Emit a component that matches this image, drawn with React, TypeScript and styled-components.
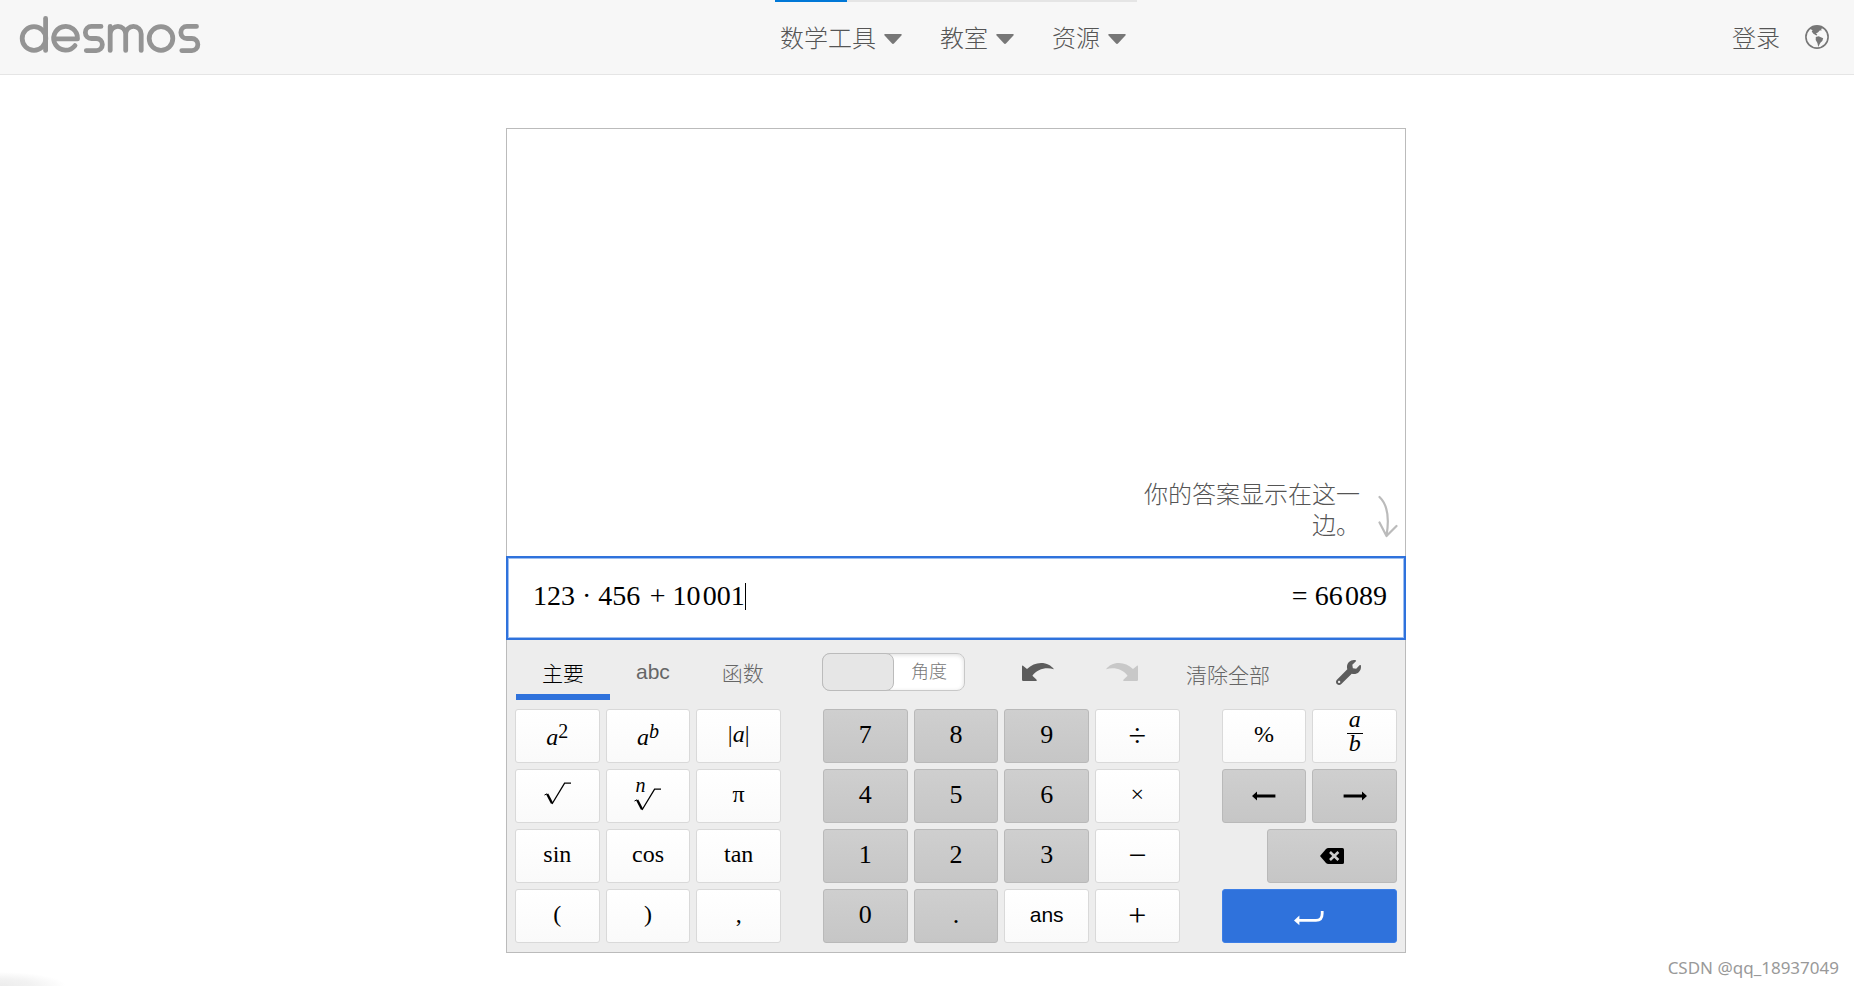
import React, { useState } from 'react';
import styled, { createGlobalStyle, css } from 'styled-components';
import { FaWrench } from 'react-icons/fa';

const sans = '"Liberation Sans", "Noto Sans CJK SC", sans-serif';
const serif = '"Liberation Serif", "Noto Sans CJK SC", serif';
const blue = '#2f72dc';

const GlobalStyle = createGlobalStyle`
  *, *::before, *::after { box-sizing: border-box; }
  body { margin: 0; background: #fff; font-family: ${sans}; }
  button, input { font: inherit; color: inherit; }
  button { cursor: pointer; }
`;

const Page = styled.div`
  position: relative;
  display: flex;
  flex-direction: column;
  min-height: 100vh;
`;

const Header = styled.header`
  display: grid;
  grid-template-columns: 1fr auto 1fr;
  height: 75px;
  padding-left: 58px;
  background: #f7f7f7;
  border-bottom: 1px solid #e5e5e5;
`;

const LogoLink = styled.a`
  justify-self: start;
  display: block;
  margin: 15px 0 0 -39px;
  svg { display: block; }
`;

const NavArea = styled.div`
  width: 362px;
`;

const ProgressBar = styled.div`
  height: 2px;
  background: #e5e5e5;
`;

const ProgressFill = styled.div`
  width: 20%;
  height: 100%;
  background: #0078d7;
`;

const Nav = styled.nav`
  display: flex;
  gap: 38px;
  height: 72px;
  padding: 2px 5px 0;
  align-items: center;
`;

const NavButton = styled.button`
  display: flex;
  align-items: center;
  gap: 8px;
  flex: none;
  padding: 0;
  border: 0;
  background: none;
  color: #555;
  font-size: 24px;
  font-weight: 300;
  line-height: 36px;
`;

const Account = styled.div`
  justify-self: end;
  display: flex;
  align-items: center;
  gap: 25px;
  padding-right: 25px;
`;

const LoginLink = styled.a`
  padding-bottom: 2px;
  color: #555;
  font-size: 24px;
  font-weight: 300;
  text-decoration: none;
`;

const IconButton = styled.button`
  display: flex;
  align-items: center;
  justify-content: center;
  padding: 0;
  border: 0;
  background: none;
  color: #5c5c5c;
  &:disabled { color: #c8c8c8; }
`;

const Main = styled.main`
  flex: 1;
  display: flex;
  justify-content: center;
  padding: 53px 0 33px 58px;
`;

const Calculator = styled.section`
  display: flex;
  flex-direction: column;
  width: 900px;
  max-width: 100%;
  border: 1px solid #bbb;
  background: #fff;
`;

const Transcript = styled.div`
  flex: 1;
  display: flex;
  align-items: flex-end;
  justify-content: flex-end;
  gap: 18px;
  padding: 0 7px 15px 0;
  svg { margin-bottom: 2px; }
`;

const Hint = styled.p`
  width: 220px;
  margin: 0;
  color: #555;
  font-size: 24px;
  font-weight: 300;
  line-height: 31px;
  text-align: right;
`;

const ExpressionRow = styled.div`
  display: flex;
  align-items: center;
  height: 84px;
  margin: 0 -1px;
  padding: 0 17px 4px 25px;
  border: 2px solid ${blue};
  box-shadow: inset 0 0 0 1px #9dbef0;
  font-family: ${serif};
  font-size: 28px;
  color: #000;
`;

const ExpressionInput = styled.input`
  field-sizing: content;
  padding: 0;
  border: 0;
  outline: 0;
  background: none;
`;

const Caret = styled.span`
  width: 1px;
  height: 27px;
  background: #000;
`;

const Result = styled.output`
  margin-left: auto;
  white-space: pre;
`;

const Keypad = styled.div`
  padding: 0 8px 9px;
  background: #ededed;
`;

const columns = css`
  display: grid;
  grid-template-columns: repeat(3, 1fr) 30px repeat(4, 1fr) 30px repeat(2, 1fr);
  gap: 6px;
`;

const Toolbar = styled.div`
  ${columns}
  height: 69px;
`;

const Tabs = styled.div`
  grid-column: 1 / 5;
  display: flex;
  height: 60px;
  padding-left: 1px;
`;

const Tab = styled.button<{ $active: boolean }>`
  padding: 9px 26px 0;
  border: 0;
  border-bottom: 6px solid ${p => (p.$active ? blue : 'transparent')};
  background: none;
  color: ${p => (p.$active ? '#000' : '#666')};
  font-size: 21px;
  font-weight: 300;
  white-space: nowrap;
`;

const Tools = styled.div`
  grid-column: 5 / 12;
  display: flex;
  align-items: center;
  height: 64px;
`;

const AngleToggle = styled.div`
  display: flex;
  width: 143px;
  height: 38px;
  margin: 0 57px 0 -1px;
  border: 1px solid #c8c8c8;
  border-radius: 8px;
  background: #fff;
  box-shadow: inset 0 1px 4px #ddd;
`;

const AngleOption = styled.button<{ $selected?: boolean }>`
  flex: 1;
  margin: ${p => (p.$selected ? '-1px 0 -1px -1px' : '0')};
  padding: 0 0 4px;
  border: ${p => (p.$selected ? '1px solid #bbb' : '0')};
  border-radius: 8px;
  background: ${p => (p.$selected ? '#e6e6e6' : 'none')};
  color: #777;
  font-size: 18px;
  font-weight: 300;
`;

const History = styled.div`
  display: flex;
  gap: 52px;
`;

const ClearButton = styled.button`
  margin: 4px 66px 0 48px;
  padding: 0;
  border: 0;
  background: none;
  color: #666;
  font-size: 21px;
  font-weight: 300;
  white-space: nowrap;
`;

const Keys = styled.div`
  ${columns}
  grid-auto-rows: 54px;
`;

type Tone = 'light' | 'dark' | 'blue';
type Face = 'math' | 'sans' | 'digit' | 'operator';

const tones = {
  light: css`
    border-color: #d9d9d9;
    background: linear-gradient(#fff, #fafafa);
    color: #000;
  `,
  dark: css`
    border-color: #b9b9b9;
    background: linear-gradient(#cfcfcf, #c6c6c6);
    color: #000;
  `,
  blue: css`
    border-color: #3c7ee6;
    background: ${blue};
    color: #fff;
  `,
};

const faces = {
  math: css`
    padding: 0 0 5px;
    font-family: ${serif};
    font-size: 24px;
  `,
  sans: css`
    padding: 0 0 3px;
    font-family: ${sans};
    font-size: 21px;
  `,
  digit: css`
    padding: 0 0 3px;
    font-family: ${serif};
    font-size: 26px;
  `,
  operator: css`
    padding: 0 0 3px;
    font-family: ${serif};
    font-size: 32px;
  `,
};

const Key = styled.button<{ $tone: Tone; $col: number; $span?: number; $face?: Face }>`
  grid-column: ${p => p.$col} / span ${p => p.$span ?? 1};
  display: flex;
  align-items: center;
  justify-content: center;
  min-width: 0;
  border: 1px solid;
  border-radius: 3px;
  line-height: 28px;
  ${p => faces[p.$face ?? 'math']}
  ${p => tones[p.$tone]}
`;

const IconKey = styled(Key)`
  padding: 0;
`;

const BackspaceKey = styled(IconKey)`
  justify-self: end;
  width: 74%;
`;

const EnterKey = styled(IconKey)`
  padding-top: 3px;
`;

const PowerKey = styled(Key)`
  padding: 2px 0 0;
`;

const Variable = styled.i`
  font-family: ${serif};
`;

const Exponent = styled.sup`
  align-self: flex-start;
  padding-top: 5px;
  font-size: 20px;
  line-height: 28px;
`;

const NthRoot = styled.span`
  display: flex;
  flex-direction: column;
  font-size: 20px;
  line-height: 16px;
  text-align: left;
  i { padding-left: 1px; }
  svg { margin-top: -5px; }
`;

const Fraction = styled.span`
  align-self: flex-start;
  display: flex;
  flex-direction: column;
  width: 16px;
  text-align: center;
  line-height: 18px;
  i:first-child {
    padding-bottom: 5px;
    border-bottom: 1px solid #000;
  }
`;

const Watermark = styled.div`
  position: absolute;
  right: 15px;
  bottom: 6px;
  color: #999;
  font-family: "Noto Sans", sans-serif;
  font-size: 17px;
  line-height: 24px;
`;

const CornerShade = styled.div`
  position: absolute;
  left: 0;
  bottom: 0;
  width: 66px;
  height: 14px;
  background: radial-gradient(ellipse 100% 100% at 0 100%, #ececec, #f2f2f2 50%, #fff);
`;

const Logo = () => (
  <svg width="182" height="38" viewBox="19 15 182 38" fill="none" stroke="#949494" strokeWidth="4.8" strokeLinecap="round" strokeLinejoin="round" aria-hidden="true">
    <circle cx="34" cy="38.5" r="11.8" />
    <path d="M45.6 18.4V50.4" />
    <path d="M54 38.8H77.5A11.9 11.9 0 1 0 75 45.6" />
    <path d="M101 26.4H91.4a6 6 0 0 0 0 12.1H96.3a6 6 0 0 1 0 12.1H86.3" />
    <path d="M110.2 50.4V26.4M110.2 34a7.75 7.6 0 0 1 15.5 0V50.4M125.7 34a7.75 7.6 0 0 1 15.5 0V50.4" />
    <circle cx="161" cy="38.5" r="11.8" />
    <path d="M196.5 26.4H186.9a6 6 0 0 0 0 12.1H191.8a6 6 0 0 1 0 12.1H181.8" />
  </svg>
);

const Triangle = () => (
  <svg width="18" height="10" viewBox="0 0 18 10" aria-hidden="true">
    <path d="M1.2 0H16.8Q18.4 .3 17.4 1.6L10.2 9.3Q9 10.5 7.8 9.3L.6 1.6Q-.4 .3 1.2 0Z" fill="#777" />
  </svg>
);

const Globe = () => (
  <svg width="24" height="24" viewBox="0 0 24 24" aria-hidden="true">
    <circle cx="12" cy="12" r="11.1" fill="none" stroke="#777" strokeWidth="1.6" />
    <path d="M6.3 2.7L9 1L16.3 1.3L17.4 3.4L15.8 4L17 5.2L14.7 5.6L12.9 7.6L11 8.2L12.3 9.8L11.4 10.6L8.4 8.8L6.7 6.4L7.6 5.2L5.6 4.2ZM10.8 12L13.6 11.2L18.2 13.2L17.3 16L15.6 17.4L14.7 19L13.3 22L12.4 18L10.7 15Z" fill="#777" />
  </svg>
);

const HintArrow = () => (
  <svg width="20" height="44" viewBox="0 0 20 44" fill="none" stroke="#bbb" strokeWidth="2.2" strokeLinecap="round" strokeLinejoin="round" aria-hidden="true">
    <path d="M1.5 2C9 9 11.5 23 8.5 41M1.5 27.5L8.5 41L18.5 31" />
  </svg>
);

const Undo = ({ flipped = false }: { flipped?: boolean }) => (
  <svg width="32" height="18" viewBox="0 0 32 18" aria-hidden="true">
    <path transform={flipped ? 'translate(32 0) scale(-1 1)' : undefined} d="M1 2.8L5 6C9 2 14 0 19 0C25 0 29 2.5 32 6.2C24 3.6 15 6 10.4 12.8L14.4 16.4Q15.6 18 14 18H1.2Q0 18 0 16.8V3.4Q0 2.2 1 2.8Z" fill="currentColor" />
  </svg>
);

const Root = () => (
  <svg width="27" height="23" viewBox="0 0 27 23" fill="none" stroke="#000" aria-hidden="true">
    <path d="M.5 13L3 11.8" strokeWidth="1" />
    <path d="M3.2 12L8 21.2" strokeWidth="2.4" />
    <path d="M8 22L20.6 1.2H27" strokeWidth="1.3" />
  </svg>
);

const Arrow = ({ right = false }: { right?: boolean }) => (
  <svg width="24" height="10" viewBox="0 0 24 10" aria-hidden="true">
    <path transform={right ? 'translate(24 0) scale(-1 1)' : undefined} d="M0 5L5 .6V3.6H23.4V6.4H5V9.4Z" fill="#000" />
  </svg>
);

const Backspace = () => (
  <svg width="24" height="16" viewBox="0 0 24 16" aria-hidden="true">
    <path d="M0 8L6 1Q7 0 8.4 0H22.4Q24 0 24 1.6V14.4Q24 16 22.4 16H8.4Q7 16 6 15Z" fill="#000" />
    <path d="M10 4L18.4 12M18.4 4L10 12" stroke="#ccc" strokeWidth="2.6" />
  </svg>
);

const Enter = () => (
  <svg width="30" height="16" viewBox="0 0 30 16" aria-hidden="true">
    <path d="M28.2 1V3.5Q28.2 10.4 22 10.4H4" fill="none" stroke="#fff" strokeWidth="2.8" />
    <path d="M0 10.4L5.4 5.6V15.2Z" fill="#fff" />
  </svg>
);

const Digit = ({ col, children }: { col: number; children: string }) => (
  <Key $tone="dark" $col={col} $face="digit">{children}</Key>
);

const Operator = ({ children }: { children: string }) => (
  <Key $tone="light" $col={8} $face="operator">{children}</Key>
);

const tabNames = ['主要', 'abc', '函数'];
const menus = ['数学工具', '教室', '资源'];

export default function App() {
  const [tab, setTab] = useState(0);
  const [expression, setExpression] = useState('123 · 456 \u200a+ 10\u200a001');

  return (
    <Page>
      <GlobalStyle />
      <Header>
        <LogoLink href="#" aria-label="desmos"><Logo /></LogoLink>
        <NavArea>
          <ProgressBar><ProgressFill /></ProgressBar>
          <Nav>
            {menus.map(name => (
              <NavButton key={name}>{name}<Triangle /></NavButton>
            ))}
          </Nav>
        </NavArea>
        <Account>
          <LoginLink href="#">登录</LoginLink>
          <IconButton aria-label="语言"><Globe /></IconButton>
        </Account>
      </Header>
      <Main>
        <Calculator>
          <Transcript>
            <Hint>你的答案显示在这一边。</Hint>
            <HintArrow />
          </Transcript>
          <ExpressionRow>
            <ExpressionInput aria-label="表达式" value={expression} onChange={e => setExpression(e.target.value)} />
            <Caret />
            <Result>{'= 66\u200a089'}</Result>
          </ExpressionRow>
          <Keypad>
            <Toolbar>
              <Tabs role="tablist">
                {tabNames.map((name, i) => (
                  <Tab key={name} role="tab" aria-selected={tab === i} $active={tab === i} onClick={() => setTab(i)}>{name}</Tab>
                ))}
              </Tabs>
              <Tools>
                <AngleToggle>
                  <AngleOption $selected aria-label="弧度" />
                  <AngleOption>角度</AngleOption>
                </AngleToggle>
                <History>
                  <IconButton aria-label="撤销"><Undo /></IconButton>
                  <IconButton aria-label="重做" disabled><Undo flipped /></IconButton>
                </History>
                <ClearButton>清除全部</ClearButton>
                <IconButton aria-label="设置"><FaWrench size={25} /></IconButton>
              </Tools>
            </Toolbar>
            <Keys>
              <PowerKey $tone="light" $col={1}><Variable>a</Variable><Exponent>2</Exponent></PowerKey>
              <PowerKey $tone="light" $col={2}><Variable>a</Variable><Exponent><i>b</i></Exponent></PowerKey>
              <Key $tone="light" $col={3}>|<Variable>a</Variable>|</Key>
              <Digit col={5}>7</Digit>
              <Digit col={6}>8</Digit>
              <Digit col={7}>9</Digit>
              <Operator>÷</Operator>
              <Key $tone="light" $col={10}>%</Key>
              <IconKey $tone="light" $col={11}><Fraction><i>a</i><i>b</i></Fraction></IconKey>

              <Key $tone="light" $col={1} aria-label="平方根"><Root /></Key>
              <Key $tone="light" $col={2}><NthRoot><i>n</i><Root /></NthRoot></Key>
              <Key $tone="light" $col={3}>π</Key>
              <Digit col={5}>4</Digit>
              <Digit col={6}>5</Digit>
              <Digit col={7}>6</Digit>
              <Key $tone="light" $col={8}>×</Key>
              <IconKey $tone="dark" $col={10} aria-label="向左"><Arrow /></IconKey>
              <IconKey $tone="dark" $col={11} aria-label="向右"><Arrow right /></IconKey>

              <Key $tone="light" $col={1}>sin</Key>
              <Key $tone="light" $col={2}>cos</Key>
              <Key $tone="light" $col={3}>tan</Key>
              <Digit col={5}>1</Digit>
              <Digit col={6}>2</Digit>
              <Digit col={7}>3</Digit>
              <Operator>−</Operator>
              <BackspaceKey $tone="dark" $col={10} $span={2} aria-label="退格"><Backspace /></BackspaceKey>

              <Key $tone="light" $col={1}>(</Key>
              <Key $tone="light" $col={2}>)</Key>
              <Key $tone="light" $col={3}>,</Key>
              <Digit col={5}>0</Digit>
              <Digit col={6}>.</Digit>
              <Key $tone="light" $col={7} $face="sans">ans</Key>
              <Operator>+</Operator>
              <EnterKey $tone="blue" $col={10} $span={2} aria-label="回车"><Enter /></EnterKey>
            </Keys>
          </Keypad>
        </Calculator>
      </Main>
      <Watermark>CSDN @qq_18937049</Watermark>
      <CornerShade />
    </Page>
  );
}
